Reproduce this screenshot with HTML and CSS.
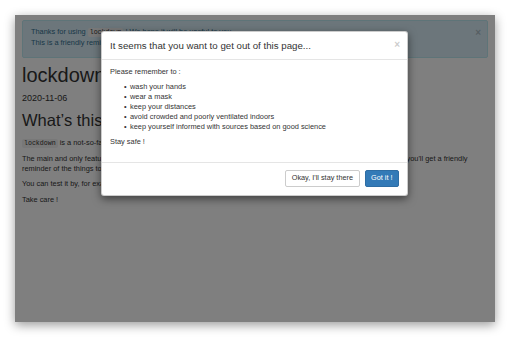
FILE: index.html
```html
<!DOCTYPE html>
<html lang="en">
<head>
    <meta charset="UTF-8">
    <meta name="viewport" content="width=device-width, initial-scale=1.0">
    <title>lockdown</title>
    <link rel="stylesheet" href="styles.css">
</head>
<body>
    <div class="window">
        <div class="page">
            <div class="alert">
                <button type="button" class="close">&times;</button>
                <p>Thanks for using <code>lockdown</code> ! We hope it will be useful to you.</p>
                <p>This is a friendly reminder page, feel free to close it.</p>
            </div>

            <h1>lockdown</h1>
            <p class="date">2020-11-06</p>

            <h2>What&rsquo;s this ?</h2>
            <p><code>lockdown</code> is a not-so-fancy browser extension.</p>
            <p>The main and only feature of this extension is that whenever you are just about to close a tab or leave any web page, you'll get a friendly reminder of the things to do to stay safe.</p>
            <p>You can test it by, for example, closing this tab.</p>
            <p>Take care !</p>
        </div>

        <div class="backdrop"></div>

        <div class="modal">
            <div class="modal-header">
                <button type="button" class="close">&times;</button>
                <h4 class="modal-title">It seems that you want to get out of this page...</h4>
            </div>
            <div class="modal-body">
                <p>Please remember to :</p>
                <ul>
                    <li>wash your hands</li>
                    <li>wear a mask</li>
                    <li>keep your distances</li>
                    <li>avoid crowded and poorly ventilated indoors</li>
                    <li>keep yourself informed with sources based on good science</li>
                </ul>
                <p>Stay safe !</p>
            </div>
            <div class="modal-footer">
                <button type="button" class="btn btn-default">Okay, I'll stay there</button>
                <button type="button" class="btn btn-primary">Got it !</button>
            </div>
        </div>
    </div>
</body>
</html>
```

FILE: styles.css
```css
body {
    margin: 0;
    padding: 15px;
    background: #fff;
    font-family: "Liberation Sans", Arial, sans-serif;
}

.window {
    position: relative;
    width: 480px;
    height: 307px;
    overflow: hidden;
    background: #fff;
    box-shadow: 0 3px 10px rgba(0, 0, 0, 0.4);
}

.page {
    padding: 4.5px 7px 0;
    color: #333;
    font-size: 7.4px;
    line-height: 10px;
}

.page p {
    margin: 0 0 5.4px;
}

code {
    font-family: "Liberation Mono", monospace;
    font-size: 6.6px;
    padding: 1px 2px;
    border-radius: 2px;
    background: #f0f0f0;
    color: #333;
}

.close {
    float: right;
    padding: 0;
    border: 0;
    background: none;
    font-family: "Liberation Sans", Arial, sans-serif;
    font-size: 10px;
    font-weight: bold;
    line-height: 1;
    color: #000;
    opacity: 0.2;
}

.alert {
    padding: 6px 8px 9px;
    border: 1px solid #bce8f1;
    border-radius: 2px;
    background: #d9edf7;
    color: #31708f;
}

.alert .close {
    margin: 1px -2px 0 0;
}

.page .alert p {
    margin: 0;
}

h1 {
    margin: 6px 0 0;
    font-size: 20px;
    line-height: 22px;
    font-weight: normal;
}

.page .date {
    margin: 6px 0 0;
    font-size: 9px;
    line-height: 12px;
}

h2 {
    margin: 7px 0 9px;
    font-size: 16.5px;
    line-height: 18px;
    font-weight: normal;
}

.backdrop {
    position: absolute;
    inset: 0;
    background: rgba(0, 0, 0, 0.5);
}

.modal {
    position: absolute;
    top: 15.5px;
    left: 86px;
    width: 307px;
    box-sizing: border-box;
    background: #fff;
    border: 1px solid rgba(0, 0, 0, 0.2);
    border-radius: 3px;
    box-shadow: 0 3px 8px rgba(0, 0, 0, 0.5);
    color: #333;
    font-size: 7.4px;
    line-height: 10px;
}

.modal-header {
    padding: 7px 8px;
    border-bottom: 1px solid #e5e5e5;
}

.modal-header .close {
    margin: 1px -1px 0 0;
}

.modal-title {
    margin: 0;
    font-size: 9.7px;
    line-height: 13px;
    font-weight: normal;
}

.modal-body {
    padding: 7px 8px 10px;
}

.modal-body p {
    margin: 0 0 5px;
}

.modal-body ul {
    margin: 0 0 5px;
    padding-left: 20px;
    list-style: none;
}

.modal-body li::before {
    content: "\2022";
    display: inline-block;
    width: 6px;
    margin-left: -6px;
}

.modal-footer {
    display: flex;
    justify-content: flex-end;
    gap: 5px;
    padding: 7.5px 8px;
    border-top: 1px solid #e5e5e5;
}

.btn {
    padding: 2.3px 5.5px;
    border: 1px solid transparent;
    border-radius: 2px;
    font-family: "Liberation Sans", Arial, sans-serif;
    font-size: 7.3px;
    line-height: 10.4px;
}

.btn-default {
    color: #333;
    background: #fff;
    border-color: #ccc;
}

.btn-primary {
    color: #fff;
    background: #337ab7;
    border-color: #2e6da4;
}
```
